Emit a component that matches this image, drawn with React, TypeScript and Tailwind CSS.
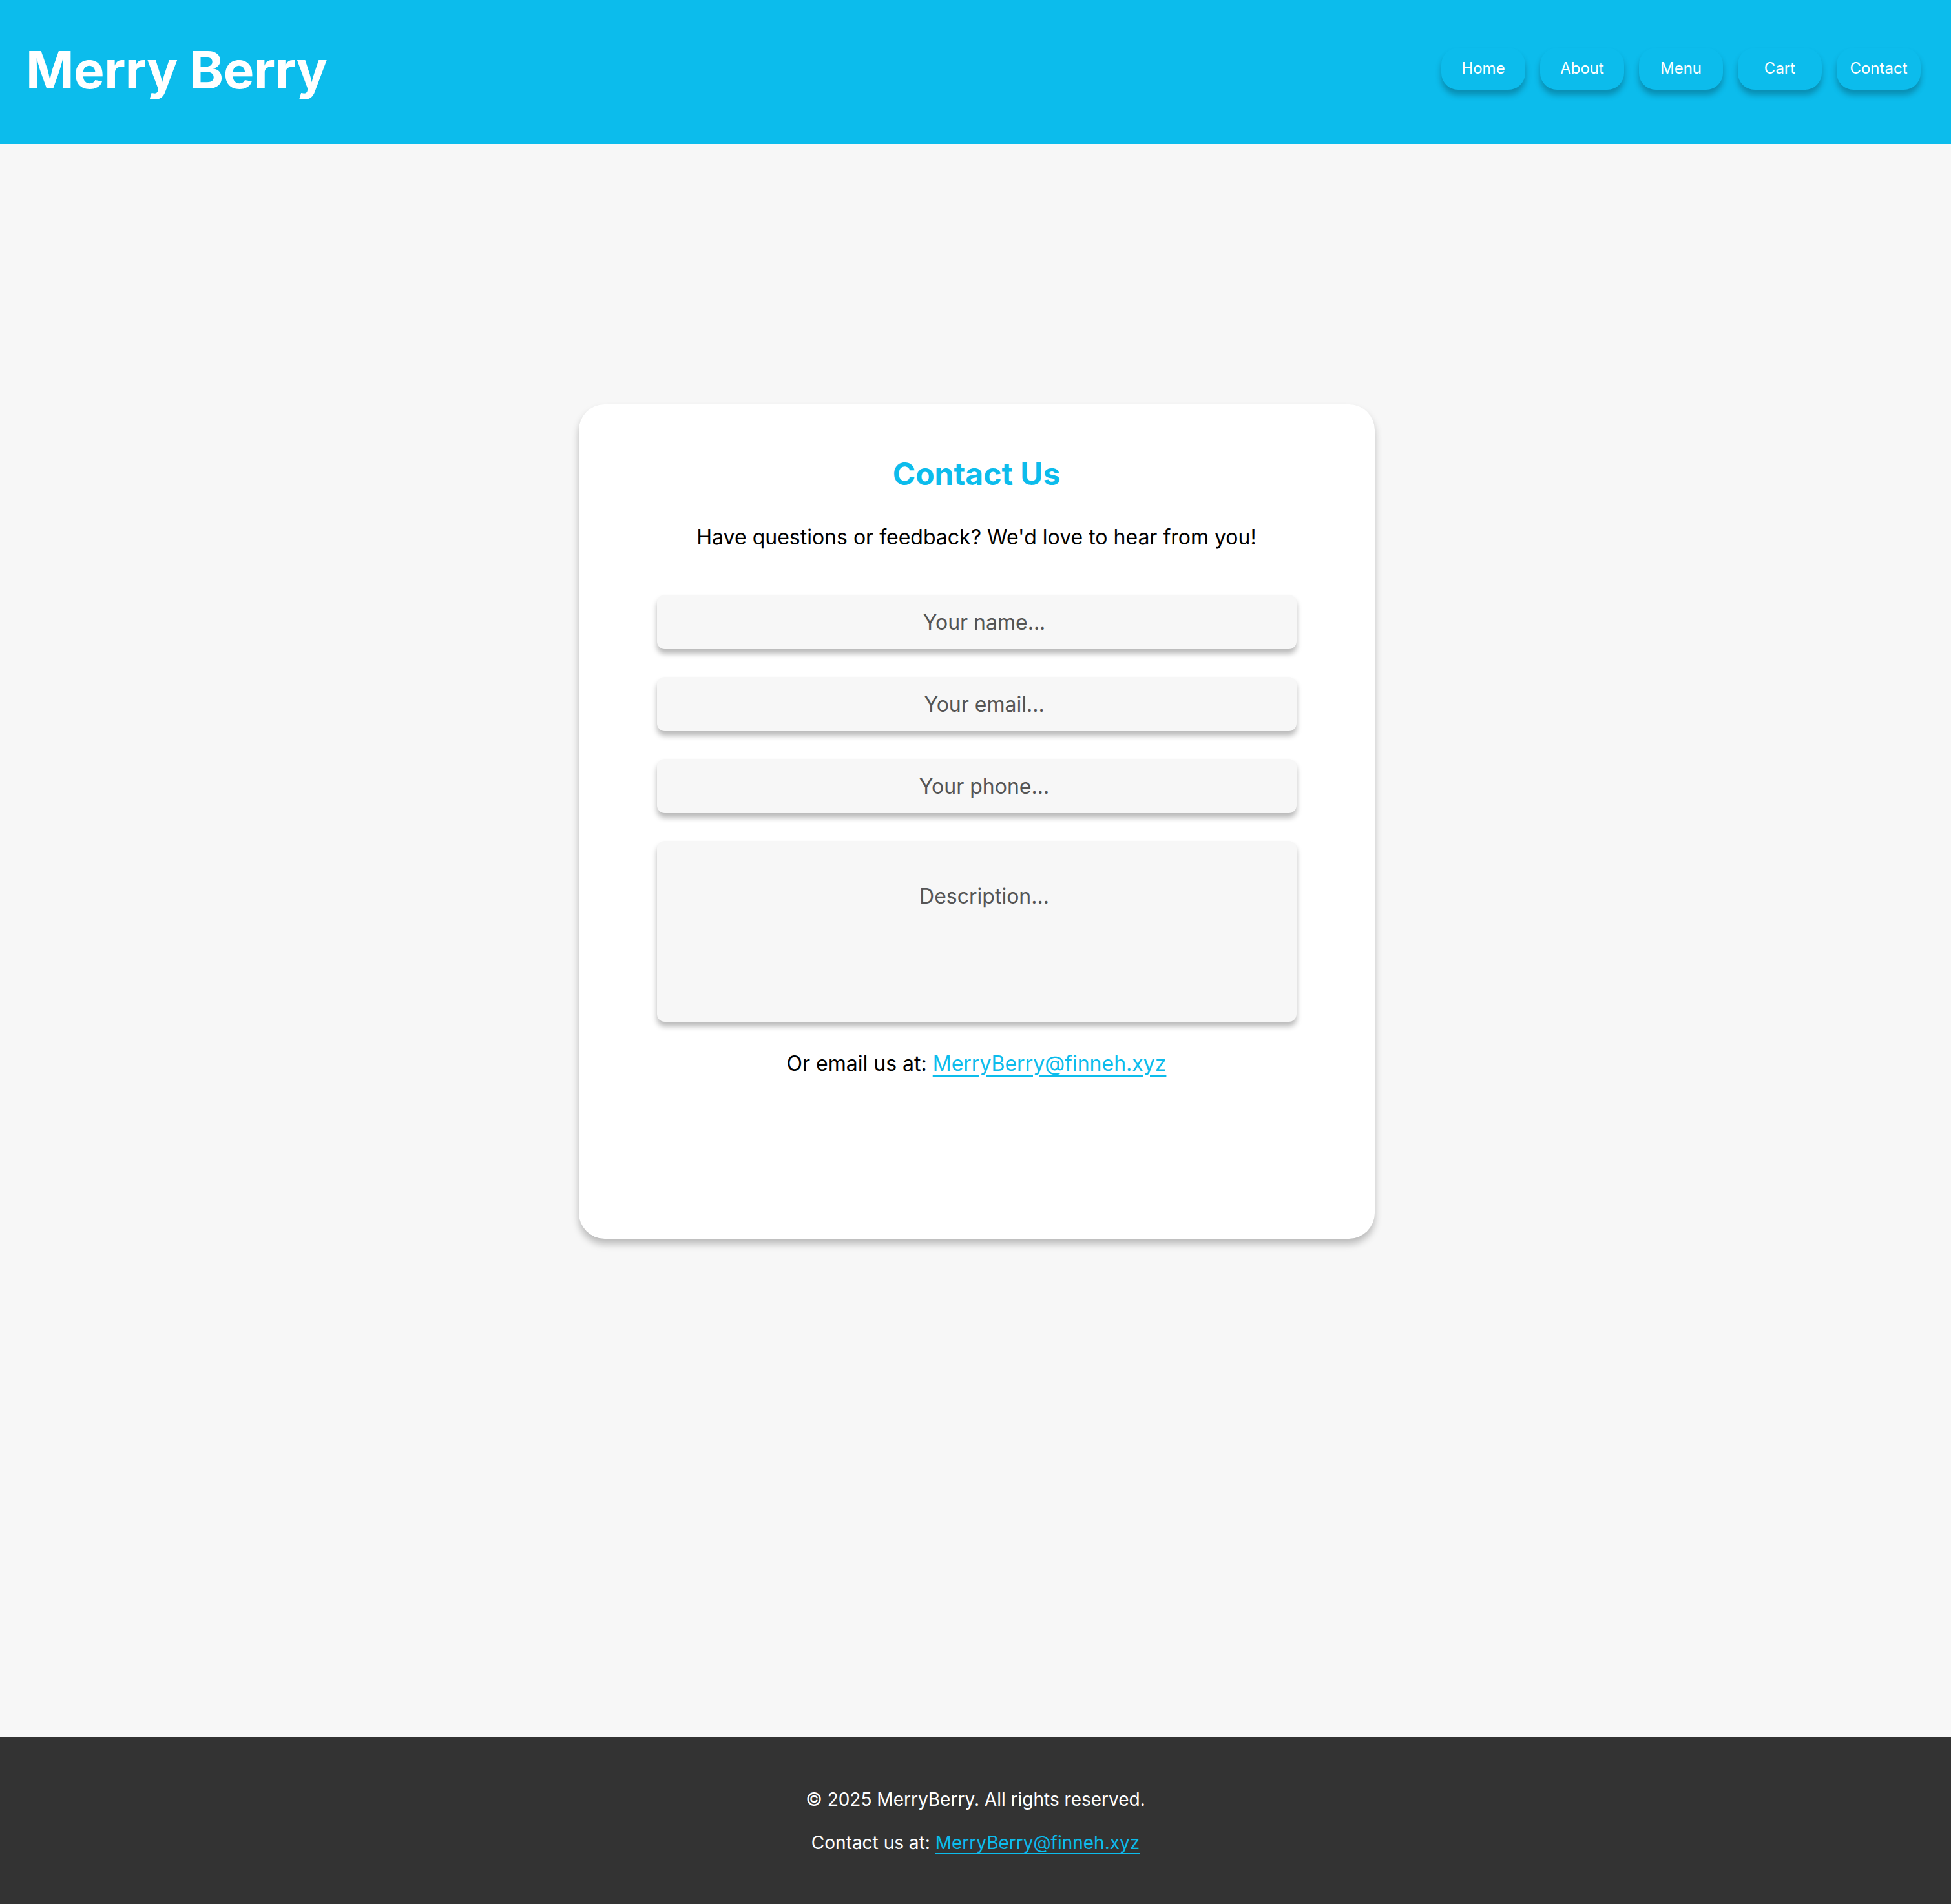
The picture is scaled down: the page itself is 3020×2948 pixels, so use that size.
export default function App() {
  const navItems = ["Home", "About", "Menu", "Cart", "Contact"];

  return (
    <div className="min-h-screen flex flex-col bg-[#f7f7f7] font-['Inter',sans-serif]">
      {/* Header */}
      <header className="h-[223px] shrink-0 bg-[#0cbcec] flex items-center justify-between pl-[40px] pr-[47px]">
        <h1 className="text-[80px] font-bold text-white leading-none tracking-[-0.5px] -mt-[7px]">Merry Berry</h1>
        <nav className="flex items-center gap-[23px] -mt-[11px]">
          {navItems.map((item) => (
            <button
              key={item}
              className="w-[130px] h-[65px] rounded-[26px] bg-[#0cbcec] text-white text-[24px] font-normal shadow-[0_8px_10px_rgba(0,0,0,0.25)]"
            >
              {item}
            </button>
          ))}
        </nav>
      </header>

      {/* Main */}
      <main className="flex-1 flex justify-center pt-[403px]">
        <div className="w-[1232px] h-[1292px] ml-[3px] bg-white rounded-[40px] shadow-[0_8px_12px_rgba(0,0,0,0.25)] flex flex-col items-center pt-[80px]">
          <h2 className="text-[48px] font-bold text-[#0cbcec] leading-[56px]">Contact Us</h2>
          <p className="mt-[50px] text-[32px] text-black leading-[40px]">
            Have questions or feedback? We'd love to hear from you!
          </p>

          <form className="mt-[69px] w-[990px] flex flex-col gap-[43px]">
            <input
              type="text"
              placeholder="Your name..."
              className="h-[84px] w-full rounded-[12px] bg-[#f7f7f7] pl-[24px] text-center text-[32px] text-[#444] placeholder:text-[#555] shadow-[0_7px_8px_rgba(0,0,0,0.28)] outline-none"
            />
            <input
              type="email"
              placeholder="Your email..."
              className="h-[84px] w-full rounded-[12px] bg-[#f7f7f7] pl-[24px] text-center text-[32px] text-[#444] placeholder:text-[#555] shadow-[0_7px_8px_rgba(0,0,0,0.28)] outline-none"
            />
            <input
              type="tel"
              placeholder="Your phone..."
              className="h-[84px] w-full rounded-[12px] bg-[#f7f7f7] pl-[24px] text-center text-[32px] text-[#444] placeholder:text-[#555] shadow-[0_7px_8px_rgba(0,0,0,0.28)] outline-none"
            />
            <textarea
              placeholder="Description..."
              className="h-[280px] w-full resize-none rounded-[12px] bg-[#f7f7f7] pl-[24px] pt-[66px] text-center text-[32px] leading-[40px] text-[#444] placeholder:text-[#555] shadow-[0_7px_8px_rgba(0,0,0,0.28)] outline-none"
            />
          </form>

          <p className="mt-[45px] text-[32px] text-black leading-[40px]">
            Or email us at:{" "}
            <a href="#" className="text-[#0cbcec] underline underline-offset-[6px]">
              MerryBerry@finneh.xyz
            </a>
          </p>
        </div>
      </main>

      {/* Footer */}
      <footer className="h-[258px] shrink-0 bg-[#333333] flex flex-col items-center justify-center gap-[31px] text-white text-[28px] leading-[36px]">
        <p>© 2025 MerryBerry. All rights reserved.</p>
        <p>
          Contact us at:{" "}
          <a href="#" className="text-[#0cbcec] underline underline-offset-[6px]">
            MerryBerry@finneh.xyz
          </a>
        </p>
      </footer>
    </div>
  );
}
